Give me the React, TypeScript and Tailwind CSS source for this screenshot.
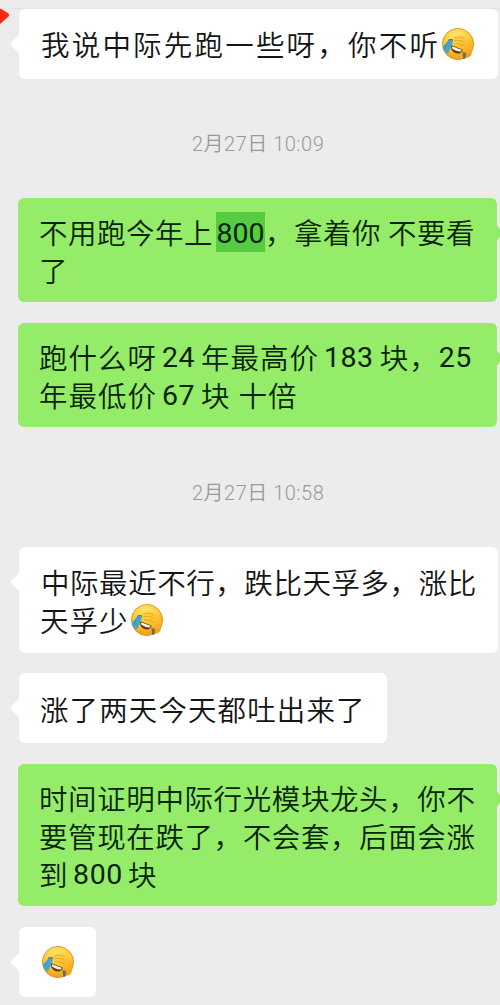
import { ReactNode } from "react";
import clsx from "clsx";

const LaughCry = ({ className }: { className?: string }) => (
  <svg viewBox="0 0 32 32" className={clsx("inline-block h-8 w-8 shrink-0", className)}>
    <defs>
      <radialGradient id="face" cx="0.45" cy="0.25" r="0.8">
        <stop offset="0" stopColor="#ffe873" />
        <stop offset="0.55" stopColor="#fdc936" />
        <stop offset="1" stopColor="#ee920f" />
      </radialGradient>
      <linearGradient id="hand" x1="0.2" y1="0" x2="0.8" y2="1">
        <stop offset="0" stopColor="#ffd94f" />
        <stop offset="0.6" stopColor="#fdbb2c" />
        <stop offset="1" stopColor="#f39a1c" />
      </linearGradient>
    </defs>
    <circle cx="16" cy="16" r="15.6" fill="url(#face)" stroke="#d98a1c" strokeWidth="0.8" />
    <path d="M20.500 24l3.200 1-.2 5.300c-.8.400-1.500.6-2.200.8z" fill="#4f7478" />
    <path
      d="M9 11.500c2.500-3.500 6-5 9.500-4.300 4.500.5 9.500 4 11.300 8.800 1 3.500.8 7.500-.5 11-1.300 2-4 3-5.800 2.800.6-2 .7-3.400.2-4.800-3.400-.8-8.400-2.400-13.200-5-1.700-1-1.800-2.200-.7-3-1.200-1.200-1.800-3.500-.8-5.500z"
      fill="url(#hand)"
    />
    <path d="M13 10c3.500-1.300 6.500-1 9.500.8M12.500 12.700c4-1 7.500-.2 10.500 1.800M13 15.500c3.500 0 7 .8 10 2.600" fill="none" stroke="#dd9a1c" strokeWidth="0.7" strokeLinecap="round" />
    <path d="M9.500 17C13 18.800 17 20.600 20.500 21.300 20.800 24.400 17.800 26.300 14 25.200 10.500 24.200 8 21 9.500 17z" fill="#6b3d10" />
    <path d="M10.300 18.300C13.500 19.800 16.500 21 19.800 21.700L18.800 23.600C15 23.400 12 22.100 10 20.200z" fill="#fffaf0" />
    <path d="M20.500 24.200l3.200.8c.3 1.500.1 3.200-.5 4.600" fill="none" stroke="#a8641a" strokeWidth="0.7" />
    <path d="M6 12.300c2-.8 3.500-1 5-.2-.2 3.200-1.500 5.200-2.500 8-.8 2.400-1.600 4.400-3.500 5.600C2.500 23.800 1.300 21 1 18c2-1.500 3.800-3.300 5-5.700z" fill="#45a5cd" />
    <path d="M5 16.500c-.8 2-1.800 3.500-3 4.500" fill="none" stroke="#2789b3" strokeWidth="0.8" />
    <path d="M6 12.300c1.500-.9 3.500-1.100 5-.3" fill="none" stroke="#75591e" strokeWidth="0.900" />
  </svg>
);

const Num = ({ children, className }: { children: ReactNode; className?: string }) => (
  <span className={clsx("font-[Roboto] font-normal", className)}>{children}</span>
);

const Line = ({ children, className }: { children: ReactNode; className?: string }) => (
  <p className={clsx("flex h-[38px] items-center whitespace-pre leading-[38px]", className)}>{children}</p>
);

const Time = ({ children }: { children: ReactNode }) => (
  <time className="ml-[192px] block h-6 w-[140px] whitespace-nowrap font-[Roboto,'Noto_Sans_CJK_SC',sans-serif] text-[20px] font-[350] leading-6 tracking-[0.5px] text-[#999]">
    {children}
  </time>
);

const Bubble = ({ mine, children, className }: { mine?: boolean; children: ReactNode; className?: string }) => (
  <section
    className={clsx(
      "relative rounded-[6px] text-[28.5px]",
      mine ? "ml-[18px] w-[479px] bg-[#95ec69] pl-[21px] pt-[15px] text-[#082407]" : "ml-[19px] bg-white pl-[21px] pt-4 text-[#151515]",
      className
    )}
  >
    {mine ? (
      <svg viewBox="0 0 4 18" className="absolute -right-[3px] top-[26px] h-[18px] w-1">
        <path d="M0 0L4 5V13L0 18z" fill="#95ec69" />
      </svg>
    ) : (
      <>
        <svg viewBox="0 0 10 20" className="absolute -left-[9px] top-[25px] h-5 w-2.5">
          <path d="M10 0L1 9Q0 10 1 11L10 20z" fill="#fff" />
        </svg>
        {/* edge of the sender's avatar */}
        <span className="absolute -left-[19px] top-4 h-[52px] w-0.5 bg-[#f1e9e4]" />
      </>
    )}
    {children}
  </section>
);

const App = () => {
  return (
    <main className="relative h-[1005px] w-[500px] overflow-hidden bg-[#ececec] font-['Noto_Sans_CJK_SC',sans-serif] font-[350]">
      <div className="h-[9px] border-b border-[#e4e4e4]" />
      <svg viewBox="0 0 10 18" className="absolute left-0 top-[7px] h-[18px] w-2.5">
        <path d="M0 2Q1 1 3 3L8.500 6.500Q10 8 8.500 9.500L0 17z" fill="#fb2c0c" />
      </svg>

      <Bubble className="h-[70px] w-[479px]">
        <Line className="ml-px tracking-[2.200px]">
          我说中际先跑一些呀，你不听
          <LaughCry className="ml-[2px]" />
        </Line>
      </Bubble>

      <div className="pt-[53px]">
        <Time>2月27日 10:09</Time>
      </div>

      <Bubble mine className="mt-[42px] h-[104px]">
        <Line className="tracking-[0.500px]">
          不用跑今年上
          <Num className="ml-[3px] h-10 w-[49px] bg-[#57cb42] text-center leading-[43px] tracking-normal">800</Num>
          ，拿着你<span className="w-[7px]"> </span>不要看
        </Line>
        <Line>了</Line>
      </Bubble>

      <Bubble mine className="mt-[21px] h-[104px]">
        <Line className="tracking-[1px]">
          跑什么呀
          <Num className="ml-[5px] mr-[6px] pt-0.5 tracking-[0.500px]">24</Num>
          年最高价
          <Num className="ml-[5px] mr-[6px] pt-0.5 tracking-[0.500px]">183</Num>
          块，<Num className="pt-0.5 tracking-[0.500px]">25</Num>
        </Line>
        <Line className="tracking-[1px]">
          年最低价
          <Num className="ml-[5px] mr-[6px] pt-0.5 tracking-[0.500px]">67</Num>块<span className="w-[8px]"> </span>十倍
        </Line>
      </Bubble>

      <div className="pt-[54px]">
        <Time>2月27日 10:58</Time>
      </div>

      <Bubble className="mt-[42px] h-[106px] w-[479px]">
        <Line className="ml-px tracking-[0.550px]">中际最近不行，跌比天孚多，涨比</Line>
        <Line className="tracking-[1px]">
          天孚少
          <LaughCry className="ml-[2px]" />
        </Line>
      </Bubble>

      <Bubble className="mt-5 h-[70px] w-[368px]">
        <Line className="pt-px tracking-[1.100px]">涨了两天今天都吐出来了</Line>
      </Bubble>

      <Bubble mine className="mt-[21px] h-[142px]">
        <Line className="tracking-[0.600px]">时间证明中际行光模块龙头，你不</Line>
        <Line className="tracking-[0.600px]">要管现在跌了，不会套，后面会涨</Line>
        <Line className="tracking-[0.600px]">
          到<Num className="mx-[5px] pt-0.5">800</Num>块
        </Line>
      </Bubble>

      <Bubble className="mt-[21px] h-[70px] w-[77px]">
        <Line>
          <LaughCry className="ml-[2px]" />
        </Line>
      </Bubble>
    </main>
  );
};

export default App;
